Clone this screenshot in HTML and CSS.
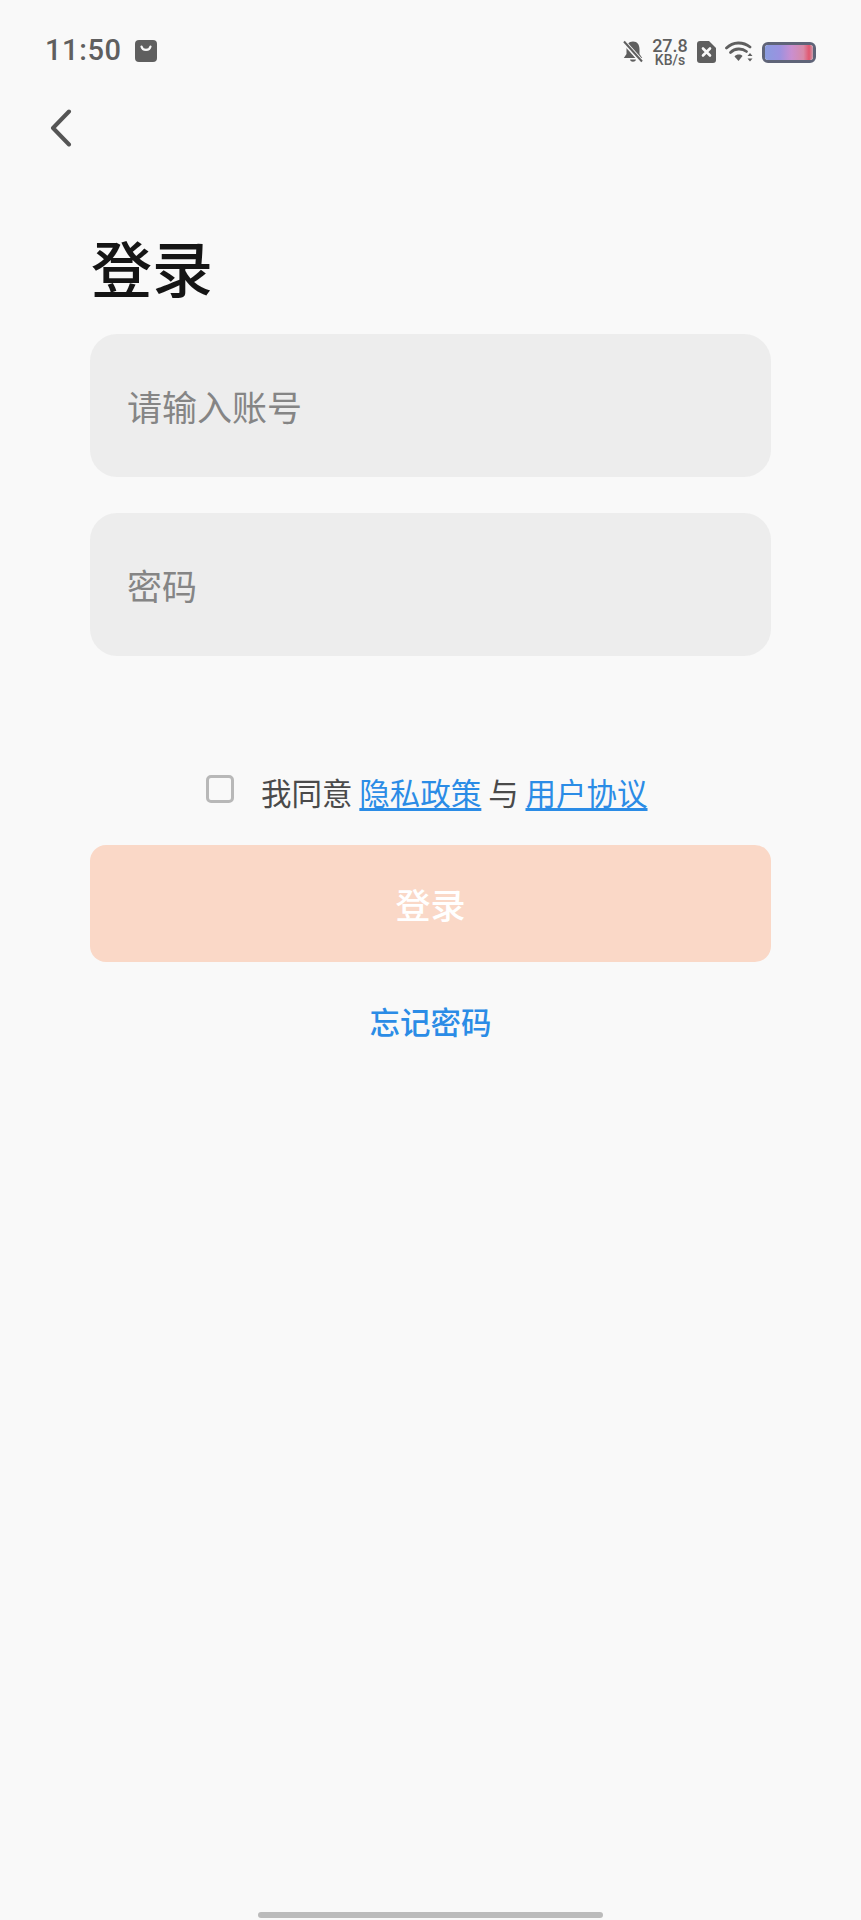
FILE: index.html
```html
<!DOCTYPE html>
<html lang="zh-CN">
  <head>
    <meta charset="UTF-8" />
    <meta name="viewport" content="width=device-width, initial-scale=1.0" />
    <title>登录</title>
    <link rel="stylesheet" href="styles.css">
  </head>
  <body>
    <div class="statusbar">
      <div class="status-left">
        <span class="time">11:50</span>
        <svg class="bag" width="22" height="22" viewBox="0 0 22 22">
          <rect width="22" height="22" rx="4" fill="#5f5f5f" />
          <path d="M6.5 6.5 C7.5 11 14.5 11 15.5 6.5" fill="none" stroke="#f9f9f9" stroke-width="2.2" stroke-linecap="round" />
        </svg>
      </div>
      <div class="status-right">
        <svg width="20" height="24" viewBox="0 0 20 24">
          <path d="M10 1.5 C5.5 1.5 3.5 5 3.5 9 V14 L0.8 18 H19.2 L16.5 14 V9 C16.5 5 14.5 1.5 10 1.5 Z M7 19.5 C7.5 22.5 12.5 22.5 13 19.5 Z" fill="#5f5f5f" />
          <path d="M1 2 L19 22" stroke="#f9f9f9" stroke-width="4.5" />
          <path d="M1 1.5 L19 21.5" stroke="#5f5f5f" stroke-width="2" />
        </svg>
        <div class="speed">
          <span class="speed-num">27.8</span>
          <span class="speed-unit">KB/s</span>
        </div>
        <svg width="19" height="22" viewBox="0 0 19 22">
          <path d="M3 0 H12 L19 7 V19 A3 3 0 0 1 16 22 H3 A3 3 0 0 1 0 19 V3 A3 3 0 0 1 3 0 Z" fill="#5f5f5f" />
          <path d="M6 7.5 L13 14.5 M13 7.5 L6 14.5" stroke="#f9f9f9" stroke-width="2.6" stroke-linecap="round" />
        </svg>
        <svg width="28" height="22" viewBox="0 0 28 22">
          <path d="M1.5 7 C8 0.5 18 0.5 25 6" fill="none" stroke="#5f5f5f" stroke-width="2.8" stroke-linecap="round" />
          <path d="M5.5 11.5 C10 7 17 7 21.5 10.5" fill="none" stroke="#5f5f5f" stroke-width="2.8" stroke-linecap="round" />
          <path d="M9.5 15.5 C11.5 13 15.5 13 17.5 15 L13.5 20 Z" fill="#5f5f5f" />
          <path d="M22.5 15 L25 12 L27.5 15 Z M22.5 17.5 L25 20.5 L27.5 17.5 Z" fill="#5f5f5f" />
        </svg>
        <div class="battery"><div class="battery-fill"></div></div>
      </div>
    </div>

    <div class="backrow">
      <svg width="22" height="38" viewBox="0 0 22 38">
        <path d="M19 2.5 L3 19 L19 35.5" fill="none" stroke="#555" stroke-width="4" stroke-linecap="round" stroke-linejoin="round" />
      </svg>
    </div>

    <form class="login">
      <h1>登录</h1>
      <div class="field">请输入账号</div>
      <div class="field">密码</div>

      <div class="agree">
        <span class="checkbox"></span>
        <span class="agree-text">我同意 <a href="#">隐私政策</a> 与 <a href="#">用户协议</a></span>
      </div>

      <button type="button" class="submit">登录</button>
      <a class="forgot" href="#">忘记密码</a>
    </form>

    <div class="homebar"></div>
  </body>
</html>
```

FILE: styles.css
```css
* {
  margin: 0;
  padding: 0;
  box-sizing: border-box;
}
body {
  font-family: "Noto Sans CJK SC", "Noto Sans", sans-serif;
  background-color: #f9f9f9;
  width: 861px;
  height: 1920px;
  display: flex;
  flex-direction: column;
}

.statusbar {
  height: 62px;
  padding: 38px 45px 0 45px;
  display: flex;
  justify-content: space-between;
  align-items: flex-start;
}
.status-left {
  display: flex;
  align-items: center;
  gap: 13px;
  height: 25px;
}
.time {
  font-family: Roboto, sans-serif;
  font-size: 29px;
  font-weight: 500;
  letter-spacing: 0.6px;
  color: #5f5f5f;
  line-height: 25px;
}
.status-right {
  display: flex;
  align-items: center;
  gap: 9px;
  height: 28px;
}
.speed {
  display: flex;
  flex-direction: column;
  align-items: center;
  width: 36px;
  font-family: Roboto, sans-serif;
  font-weight: 500;
  color: #5f5f5f;
}
.speed-num {
  font-size: 18px;
  line-height: 16px;
}
.speed-unit {
  font-size: 14px;
  line-height: 13px;
}
.battery {
  width: 54px;
  height: 21px;
  margin-left: 0;
  border: 3px solid #5f6478;
  border-radius: 6px;
  overflow: hidden;
}
.battery-fill {
  height: 100%;
  background: linear-gradient(90deg, #8a9ce0 0%, #9a92e0 30%, #c98fd0 55%, #d88aa8 80%, #e2566e 92%, #c9a0b0 100%);
}

.backrow {
  padding: 47px 0 0 50px;
  height: 87px;
  display: flex;
}

.login {
  padding: 0 90px;
  display: flex;
  flex-direction: column;
}
h1 {
  font-size: 61px;
  font-weight: 500;
  color: #151515;
  line-height: 80px;
  margin: 78px 0 27px 1px;
}
.field {
  height: 143px;
  background-color: #ededed;
  border-radius: 27px;
  padding-left: 37px;
  margin-bottom: 36px;
  display: flex;
  align-items: center;
  font-size: 35px;
  color: #858585;
}
.agree {
  display: flex;
  align-items: center;
  margin-top: 76px;
  padding-left: 116px;
  height: 48px;
}
.checkbox {
  width: 28px;
  height: 28px;
  border: 3px solid #b8b8b8;
  border-radius: 5px;
  margin-right: 27px;
  margin-top: -6px;
}
.agree-text {
  font-size: 30.5px;
  color: #4a4a4a;
  white-space: nowrap;
}
.agree-text a {
  color: #2b8ce6;
  text-underline-offset: 3px;
}
.submit {
  height: 117px;
  margin-top: 29px;
  background-color: #fad8c7;
  border: none;
  border-radius: 16px;
  color: #fff;
  font-family: inherit;
  font-size: 35px;
  font-weight: 500;
}
.forgot {
  align-self: center;
  margin-top: 37px;
  font-size: 30.5px;
  font-weight: 500;
  color: #2b8ce6;
  text-decoration: none;
}

.homebar {
  width: 345px;
  height: 6px;
  margin: auto auto 2px;
  background-color: #bbb;
  border-radius: 3px;
}
```
